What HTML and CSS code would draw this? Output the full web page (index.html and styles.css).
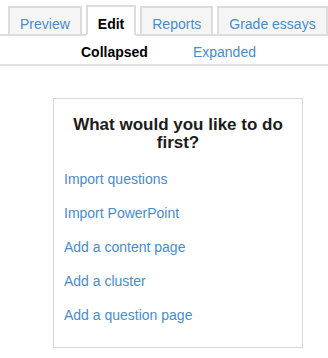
FILE: index.html
```html
<!DOCTYPE html>
<html lang="en">
<head>
    <meta charset="UTF-8">
    <title>Lesson | Edit</title>
    <link rel="stylesheet" href="styles.css">
</head>
<body>
    <ul class="tabs">
        <li class="tab"><a href="#">Preview</a></li>
        <li class="tab active"><a href="#">Edit</a></li>
        <li class="tab"><a href="#">Reports</a></li>
        <li class="tab"><a href="#">Grade essays</a></li>
    </ul>

    <div class="subtabs">
        <span class="subtab current">Collapsed</span>
        <a class="subtab" href="#">Expanded</a>
    </div>

    <div class="content">
        <div class="first-box">
            <h2 class="box-title">What would you like to do first?</h2>
            <ul class="actions">
                <li><a href="#">Import questions</a></li>
                <li><a href="#">Import PowerPoint</a></li>
                <li><a href="#">Add a content page</a></li>
                <li><a href="#">Add a cluster</a></li>
                <li><a href="#">Add a question page</a></li>
            </ul>
        </div>
    </div>
</body>
</html>
```

FILE: styles.css
```css
* {
    margin: 0;
    padding: 0;
    box-sizing: border-box;
    font-family: 'Liberation Sans', Arial, sans-serif;
}

body {
    background: #fff;
    color: #222;
    font-size: 14px;
    overflow: hidden;
}

a {
    color: #4a8cc8;
    text-decoration: none;
}

/* main tabs */
.tabs {
    list-style: none;
    display: flex;
    align-items: flex-end;
    gap: 4px;
    padding: 5px 0 0 8px;
    border-bottom: 2px solid #ddd;
    white-space: nowrap;
}

.tab {
    margin-bottom: -2px;
    border: 2px solid #ddd;
    background: #f5f5f5;
    flex-shrink: 0;
}

.tab a {
    display: block;
    padding: 6px 10px 0;
    line-height: 20px;
}

.tab.active {
    background: #fff;
    border-bottom-color: #fff;
}

.tab.active a {
    padding-top: 7px;
    color: #000;
    font-weight: 700;
}

/* sub tabs */
.subtabs {
    display: flex;
    gap: 45px;
    padding: 6px 0 2px 81px;
    line-height: 20px;
    border-bottom: 2px solid #e2e2e2;
}

.subtab.current {
    color: #000;
    font-weight: 700;
}

/* first page box */
.content {
    padding: 32px 0 0 53px;
}

.first-box {
    width: 250px;
    border: 1px solid #d8d8d8;
    padding: 17px 10px 15px;
}

.box-title {
    text-align: center;
    font-size: 17px;
    line-height: 18px;
    font-weight: 700;
    color: #1c1c1c;
    margin-bottom: 10px;
}

.actions {
    list-style: none;
}

.actions li {
    padding: 7px 0;
    line-height: 20px;
}
```
